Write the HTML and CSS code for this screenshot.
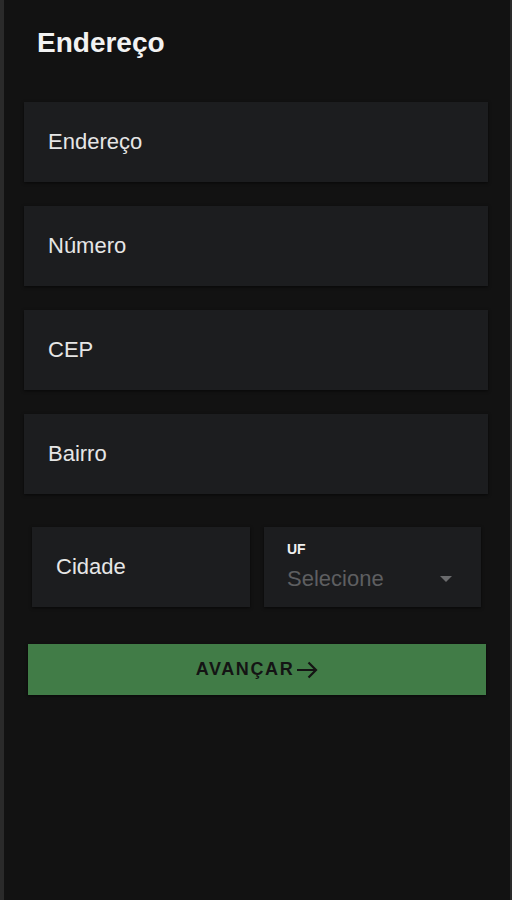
FILE: index.html
```html
<!DOCTYPE html>
<html lang="pt-BR">
    <head>
        <meta charset="utf-8">
        <title>Endereço</title>
        <meta name="viewport" content="width=device-width, initial-scale=1">
        <link rel="stylesheet" href="styles.css">
    </head>
    <body>
        <div class="screen">
            <h1 class="title">Endereço</h1>
            <form action="#" class="form">
                <div class="field"><span class="placeholder">Endereço</span></div>
                <div class="field"><span class="placeholder">Número</span></div>
                <div class="field"><span class="placeholder">CEP</span></div>
                <div class="field"><span class="placeholder">Bairro</span></div>
                <div class="row">
                    <div class="field field-city"><span class="placeholder">Cidade</span></div>
                    <div class="field field-select">
                        <span class="select-label">UF</span>
                        <div class="select-value">
                            <span>Selecione</span>
                            <span class="caret"></span>
                        </div>
                    </div>
                </div>
                <a href="#" class="button">
                    AVANÇAR
                    <svg width="22" height="18" viewBox="0 0 22 18">
                        <path d="M1 9 H20 M12.5 1.5 L20 9 L12.5 16.5" fill="none" stroke="#141414" stroke-width="2.2"/>
                    </svg>
                </a>
            </form>
        </div>
    </body>
</html>
```

FILE: styles.css
```css
* {
    margin: 0;
    padding: 0;
    box-sizing: border-box;
}
a {
    text-decoration: none;
}
body {
    background: #121212;
    font-family: "Liberation Sans", Arial, sans-serif;
}
.screen {
    height: 900px;
    border-left: 4px solid #2a2a2a;
    border-right: 2px solid #2a2a2a;
    padding: 0 22px 0 20px;
}
.title {
    padding: 27px 0 0 13px;
    height: 102px;
    font-size: 28px;
    line-height: 32px;
    font-weight: 700;
    color: #f2f2f2;
}
.form {
    display: flex;
    flex-direction: column;
    gap: 24px;
}
.field {
    height: 80px;
    background: #1c1d1f;
    box-shadow: 0 1px 3px rgba(0, 0, 0, 0.6);
    display: flex;
    align-items: center;
    padding: 0 24px;
}
.placeholder {
    font-size: 22px;
    color: #e6e6e6;
}
.row {
    display: flex;
    gap: 14px;
    padding: 9px 7px 0 8px;
}
.field-city {
    flex: 0 0 218px;
}
.field-select {
    flex: 1;
    flex-direction: column;
    align-items: stretch;
    justify-content: center;
    padding: 0 29px 0 23px;
}
.select-label {
    font-size: 14px;
    font-weight: 700;
    color: #f0f0f0;
    line-height: 16px;
    margin-bottom: 8px;
}
.select-value {
    display: flex;
    justify-content: space-between;
    align-items: center;
    font-size: 22px;
    line-height: 28px;
    color: #5e5f61;
}
.caret {
    width: 0;
    height: 0;
    border-left: 6px solid transparent;
    border-right: 6px solid transparent;
    border-top: 6px solid #6a6b6d;
}
.button {
    margin: 13px 2px 0 4px;
    height: 51px;
    background: #417c47;
    display: flex;
    align-items: center;
    justify-content: center;
    gap: 2px;
    font-size: 18px;
    font-weight: 700;
    letter-spacing: 1.6px;
    color: #141414;
    box-shadow: 0 1px 3px rgba(0, 0, 0, 0.6);
}
```
